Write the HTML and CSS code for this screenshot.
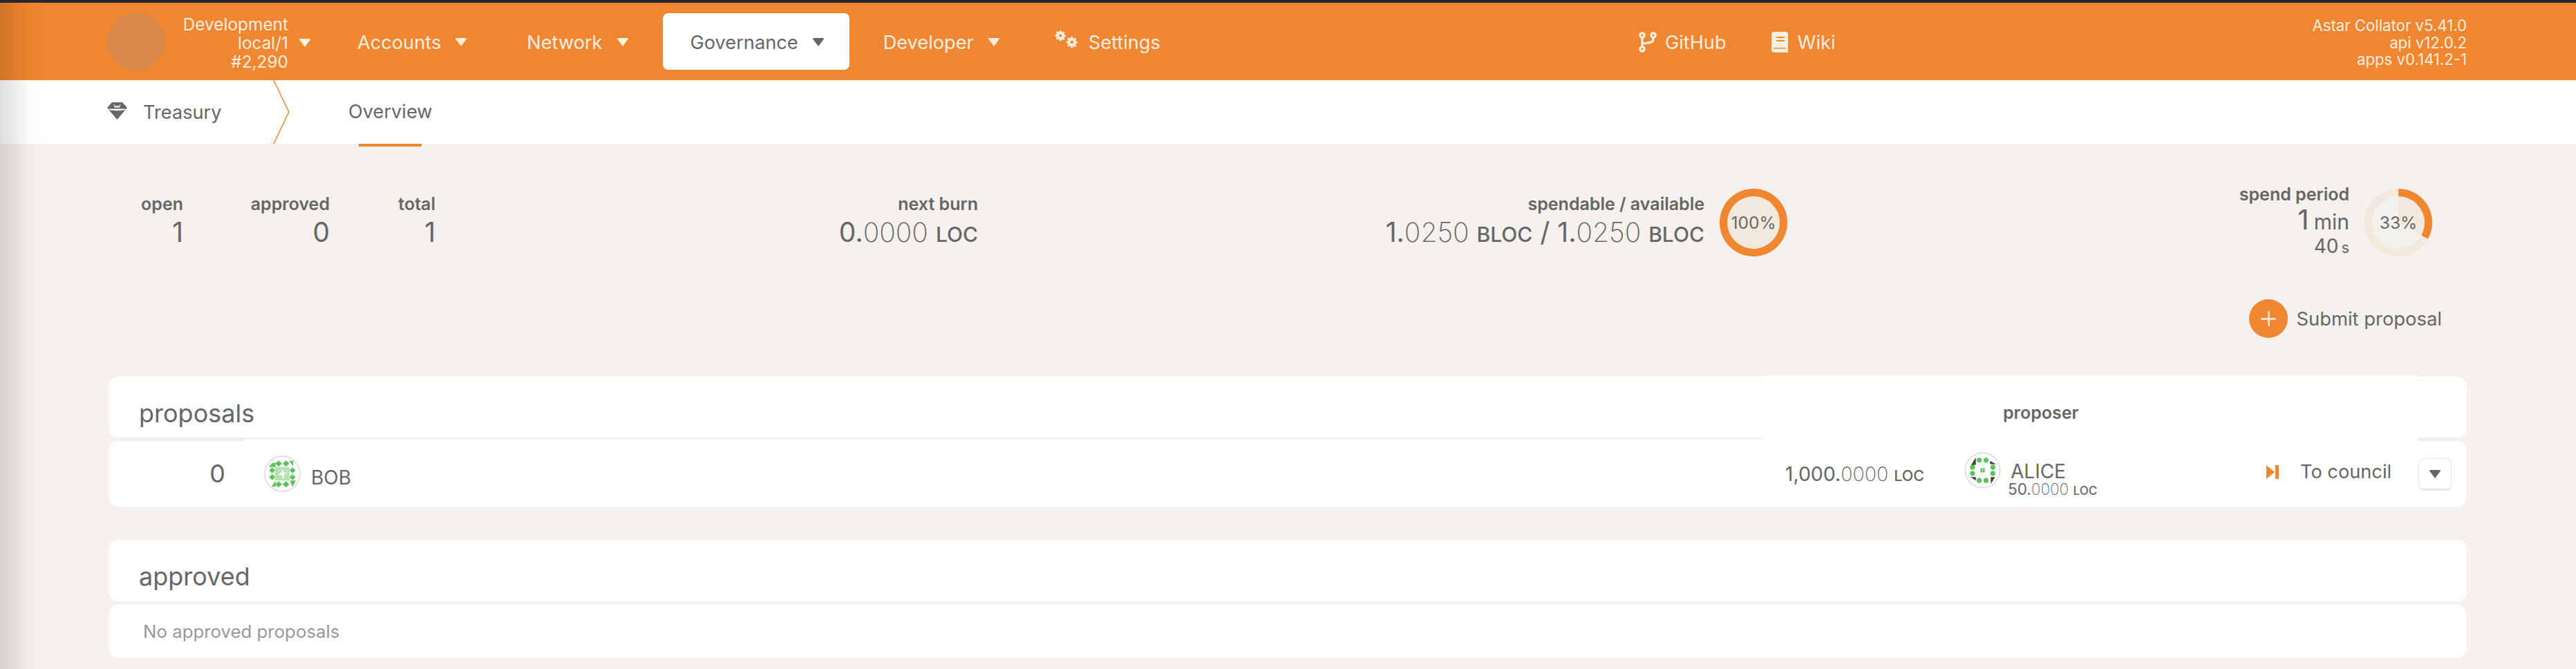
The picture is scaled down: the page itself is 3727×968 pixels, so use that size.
FILE: index.html
```html
<!DOCTYPE html>
<html lang="en">
<head>
<meta charset="utf-8">
<title>Treasury</title>
<link rel="stylesheet" href="styles.css">
</head>
<body>
<div class="edge-shade"></div>
<header class="topbar">
  <div class="chain">
    <div class="chain-logo"></div>
    <div class="chain-info">
      <div>Development</div>
      <div>local/1</div>
      <div>#2,290</div>
    </div>
    <span class="caret chain-caret"></span>
  </div>
  <nav class="menu">
    <a class="menu-item m-accounts">Accounts<span class="caret"></span></a>
    <a class="menu-item m-network">Network<span class="caret"></span></a>
    <a class="menu-item m-gov active">Governance<span class="caret"></span></a>
    <a class="menu-item m-dev">Developer<span class="caret"></span></a>
    <a class="menu-item m-settings">
      <svg class="ic-cogs" viewBox="0 0 36 28"><g fill="currentColor"><path d="M10 0h3l.5 2.600 1.600.7 2.200-1.500 2.100 2.100-1.500 2.200.7 1.600 2.600.5v3l-2.600.5-.7 1.600 1.500 2.200-2.100 2.100-2.200-1.500-1.600.7L13 19h-3l-.5-2.600-1.600-.7-2.200 1.500-2.100-2.100 1.500-2.200-.7-1.600L2 10.800v-3l2.400-.5.7-1.600-1.500-2.200 2.100-2.100 2.200 1.500 1.600-.7z" transform="scale(.8)"/><path d="M10 0h3l.5 2.600 1.600.7 2.200-1.500 2.100 2.100-1.500 2.200.7 1.600 2.600.5v3l-2.600.5-.7 1.600 1.500 2.200-2.100 2.100-2.200-1.500-1.600.7L13 19h-3l-.5-2.600-1.600-.7-2.200 1.500-2.100-2.100 1.500-2.200-.7-1.600L2 10.800v-3l2.400-.5.7-1.600-1.500-2.200 2.100-2.100 2.200 1.500 1.600-.7z" transform="translate(16 9) scale(.85)"/></g><circle cx="9.200" cy="7.400" r="2" fill="#f0862f"/><circle cx="25.800" cy="17" r="2.300" fill="#f0862f"/></svg>
      Settings
    </a>
  </nav>
  <div class="links">
    <a class="link link-gh">
      <svg class="ic-gh" viewBox="0 0 26 30"><g fill="none" stroke="currentColor" stroke-width="3.200"><circle cx="5" cy="5" r="3.200"/><circle cx="21" cy="5" r="3.200"/><circle cx="5" cy="25" r="3.200"/><path d="M5 8v14M21 8v3c0 4-4 5-16 6"/></g></svg>
      GitHub
    </a>
    <a class="link link-wiki">
      <svg class="ic-book" viewBox="0 0 24 30"><path fill="currentColor" d="M4 0h17a3 3 0 0 1 3 3v27H4a4 4 0 0 1-4-4V4a4 4 0 0 1 4-4z"/><path fill="#f0862f" d="M7 7h12v2H7zM7 12h12v2H7zM3 23h18v1.500H3z"/></svg>
      Wiki
    </a>
  </div>
  <div class="versions">
    <div>Astar Collator v5.41.0</div>
    <div>api v12.0.2</div>
    <div>apps v0.141.2-1</div>
  </div>
</header>

<div class="subbar">
  <div class="crumb">
    <svg class="ic-gem" viewBox="0 0 29 25"><path fill="#666" d="M7 0h15l7 8-14.500 17L0 8z"/><path fill="#fff" d="M2 9.500h25l-1 1.500c-6 1.500-17 1.500-23 0zM9 2l3.500 4 2-1.500 2 1.500L20 2l-2 5.500h-7z"/></svg>
    <span>Treasury</span>
  </div>
  <svg class="chevron" viewBox="0 0 24 92" preserveAspectRatio="none"><path d="M1 0l22 46L1 92" fill="none" stroke="#f0862f" stroke-width="1.500"/></svg>
  <div class="tab">Overview</div>
</div>

<main class="content">
  <section class="summary">
    <div class="stat s-open"><label>open</label><div class="val">1</div></div>
    <div class="stat s-approved"><label>approved</label><div class="val">0</div></div>
    <div class="stat s-total"><label>total</label><div class="val">1</div></div>
    <div class="stat s-burn"><label>next burn</label><div class="val">0.<i>0000</i> <small>LOC</small></div></div>
    <div class="stat s-spend"><label>spendable / available</label><div class="val">1.<i>0250</i> <small>BLOC</small> / 1.<i>0250</i> <small>BLOC</small></div></div>
    <div class="ring ring-full"><span>100%</span></div>
    <div class="stat s-period"><label>spend period</label><div class="val">1 <small class="unit">min</small></div><div class="val2">40 <small>s</small></div></div>
    <div class="ring ring-third"><span>33%</span></div>
  </section>

  <div class="actions">
    <button class="submit"><span class="plus"></span>Submit proposal</button>
  </div>

  <section class="table t-proposals">
    <div class="head">
      <h2>proposals</h2>
      <div class="head-patch"><span>proposer</span></div>
    </div>
    <div class="row">
      <div class="row-patch"></div>
      <div class="idx">0</div>
      <div class="who">
        <svg class="identicon" viewBox="0 0 54 54"><circle cx="27" cy="27" r="26" fill="#fff" stroke="#d8d8d8" stroke-width="1.500"/><path fill="#5cc25c" d="M21.600 7.500l5 4.500-5 4.500-5-4.500zM32.400 7.500l5 4.500-5 4.500-5-4.500zM12 17.500l4.500 4.500-4.500 4.500-4.500-4.500zM12 27.500l4.500 4.500-4.500 4.500-4.500-4.500zM42 17.500l4.500 4.500-4.500 4.500-4.500-4.500zM42 27.500l4.500 4.500-4.500 4.500-4.500-4.500zM21.600 38l5 4.500-5 4.500-5-4.500zM32.400 38l5 4.500-5 4.500-5-4.500zM12 11l5 0v6h-10zM37 8l6 0 0 8zM17 37v9h-6zM38 37h9l-5 9z"/><path fill="#b6e2b0" d="M16 17h21.500v20H16z"/><path fill="#fff" d="M28 20l1 5.500 5.500 .5-4.500 2.500-2 6.500-2-5.500-5.500-1.500 5-2.500z"/></svg>
        <span class="name">BOB</span>
      </div>
      <div class="amount">1,000.<i>0000</i> <small>LOC</small></div>
      <div class="proposer">
        <svg class="identicon alice" viewBox="0 0 54 54"><circle cx="27" cy="27" r="25.500" fill="#fff" stroke="#d8d8d8" stroke-width="1.500"/><g fill="#5cc25c"><circle cx="22" cy="12" r="3.700"/><circle cx="32" cy="12" r="3.700"/><circle cx="22" cy="42" r="3.700"/><circle cx="32" cy="42" r="3.700"/><circle cx="12" cy="22.500" r="3.700"/><circle cx="12" cy="31.500" r="3.700"/><circle cx="42" cy="22.500" r="3.700"/><circle cx="42" cy="31.500" r="3.700"/><path d="M24.500 23.500h1.500v7h-1.500zM28 23.500h1.500v7H28zM23.500 25h7v1.500h-7zM23.500 27.500h7V29h-7z"/></g><path fill="#444" d="M17 8l-7 11h7zM38 13l9 5h-9zM9 37h8v5zM39 37h6.500L39 47z"/></svg>
        <div class="p-text">
          <div class="name">ALICE</div>
          <div class="bond">50.<i>0000</i> <small>LOC</small></div>
        </div>
      </div>
      <a class="council">
        <svg class="ic-step" viewBox="0 0 18 20"><path fill="#f0862f" d="M0 0l12 10L0 20zM13 0h5v20h-5z"/></svg>
        To council
      </a>
      <button class="more"><span class="caret dark"></span></button>
    </div>
  </section>

  <section class="table t-approved">
    <div class="head"><h2>approved</h2></div>
    <div class="row empty">No approved proposals</div>
  </section>
</main>
</body>
</html>
```
FILE: styles.css
```css
* { box-sizing: border-box; }
html, body { margin: 0; padding: 0; height: 968px; overflow: hidden; }
body {
  background: #f4f1ee;
  color: #666;
  font-family: Inter, "Noto Sans", sans-serif;
  font-size: 28px;
  position: relative;
}
i { font-style: normal; font-weight: 200; }
.edge-shade {
  position: absolute; left: 0; top: 4px; bottom: 0; width: 70px;
  background: linear-gradient(90deg, rgba(0,0,0,.13), rgba(0,0,0,.02) 60%, transparent);
  pointer-events: none; z-index: 5;
}
.caret {
  display: inline-block; width: 0; height: 0;
  border-left: 9px solid transparent; border-right: 9px solid transparent;
  border-top: 12px solid currentColor;
  border-radius: 3px;
}

/* top bar */
.topbar {
  height: 116px; border-top: 4px solid #28272b;
  background: #f0862f; color: #fdeee0;
  display: flex; align-items: center; padding-left: 155px;
}
.chain { display: flex; align-items: center; width: 322px; flex: none; }
.chain-logo { width: 84px; height: 84px; border-radius: 50%; background: #d98a48; flex: none; }
.chain-info { width: 178px; margin-top: 4px; text-align: right; font-size: 24.400px; line-height: 27px; white-space: nowrap; }
.chain-caret { margin-left: 15px; margin-top: 4px; }
.menu { display: flex; align-items: center; flex: none; }
.menu-item {
  height: 82px; display: flex; align-items: center;
  padding: 2px 40px 0; border-radius: 8px; white-space: nowrap; font-size: 27.200px;
}
.menu-item .caret { margin-left: 20px; }
.m-network { margin-left: 6px; }
.m-gov { margin-left: 9px; padding-right: 36px; }
.m-dev { margin-left: 9px; }
.m-settings { padding: 2px 0 0; margin-left: 38px; }
.menu-item.active { background: #fff; color: #666; }
.ic-cogs { width: 36px; height: 28px; margin-right: 14px; margin-top: -6px; }
.links { display: flex; align-items: center; margin-left: 692px; margin-top: 2px; flex: none; font-size: 27.200px; }
.link { display: flex; align-items: center; }
.link-wiki { margin-left: 65px; }
.ic-gh { width: 26px; height: 30px; margin-right: 12px; }
.ic-book { width: 24px; height: 30px; margin-right: 14px; }
.versions { margin-left: auto; margin-right: 158px; margin-top: 4px; text-align: right; font-size: 22.200px; line-height: 24.500px; }

/* sub bar */
.subbar {
  height: 92px; background: #fff; display: flex; align-items: center;
  padding-left: 155px; position: relative;
}
.crumb { display: flex; align-items: center; width: 240px; flex: none; font-size: 27.200px; }
.ic-gem { width: 29px; height: 25px; margin-right: 23px; margin-top: -3px; }
.chevron { width: 24px; height: 92px; flex: none; }
.tab {
  margin-left: 85px; font-size: 27.200px; height: 92px; line-height: 92px; position: relative;
}
.tab::after {
  content: ""; position: absolute; left: 15px; right: 16px; bottom: -4px; height: 4px; background: #f0862f;
}

/* summary */
.summary { position: relative; height: 225px; }
.stat { position: absolute; top: 70px; text-align: right; white-space: nowrap; }
.stat label { display: block; font-size: 25px; font-weight: 600; line-height: 34px; }
.val { font-size: 39px; line-height: 48px; }
.val small { font-size: 30px; font-weight: 500; }
.s-open { right: calc(3727px - 265px); }
.s-approved { right: calc(3727px - 477px); }
.s-total { right: calc(3727px - 630px); }
.s-burn { right: calc(3727px - 1415px); }
.s-spend { right: calc(3727px - 2466px); }
.s-period { right: calc(3727px - 3399px); top: 56px; }
.s-period .val { line-height: 44px; font-size: 40px; margin-top: -2px; word-spacing: -4px; }
.val .unit { font-size: 30px; font-weight: 400; }
.val2 { font-size: 28px; line-height: 26px; font-weight: 400; word-spacing: -4px; }
.val2 small { font-size: 22px; font-weight: 400; }
.ring {
  position: absolute; top: 65px; width: 98px; height: 98px; border-radius: 50%;
  display: flex; align-items: center; justify-content: center; font-size: 24.500px;
}
.ring span { position: relative; }
.ring::before {
  content: ""; position: absolute; inset: 11px; border-radius: 50%; background: #f3e8dc;
}
.ring-full { left: 2488px; background: #f0862f; }
.ring-third { left: 3421px; background: conic-gradient(#f0862f 0 33%, #f3e8dc 33% 100%); }
.ring-third::before { background: conic-gradient(#f3e8dc 0 33%, #f3f1ec 33% 100%); }

.actions { height: 112px; display: flex; justify-content: flex-end; padding-right: 194px; }
.submit {
  border: 0; background: none; padding: 0; color: #666; font: inherit; font-size: 27.400px;
  display: flex; align-items: center; height: 56px;
}
.plus {
  width: 56px; height: 56px; border-radius: 50%; background: #f0862f; margin-right: 12px;
  position: relative; flex: none;
}
.plus::before, .plus::after { content: ""; position: absolute; background: #fde3cf; border-radius: 2px; }
.plus::before { left: 17px; right: 17px; top: 26.500px; height: 3px; }
.plus::after { top: 17px; bottom: 17px; left: 26.500px; width: 3px; }

/* tables */
.table { margin: 0 158px 0 157px; }
.head {
  height: 88px; background: #fff; border-radius: 14px; position: relative;
  display: flex; align-items: center; padding: 17px 0 0 44px;
}
.head h2 { margin: 0; font-size: 36px; font-weight: 400; }
.head-patch {
  position: absolute; left: 2395px; width: 947px; top: -2px; bottom: -5px;
  background: #fff; z-index: 1; font-size: 25px; font-weight: 600;
}
.head-patch span { position: absolute; left: 346px; top: 40px; line-height: 28px; }
.row {
  margin-top: 5px; background: #fff; border-radius: 14px; position: relative;
  height: 95px; display: flex; align-items: center;
}
.row-patch { position: absolute; left: 197px; width: 2198px; top: -2px; height: 4px; background: #fff; }
.idx { width: 169px; text-align: right; font-size: 36px; flex: none; margin-top: -2px; }
.who { display: flex; align-items: center; margin-left: 56px; width: 2201px; flex: none; }
.identicon { width: 53px; height: 53px; flex: none; }
.who .name { margin-left: 15px; margin-top: 10px; }
.amount { position: absolute; right: 785px; top: 31px; line-height: 34px; font-size: 28.500px; white-space: nowrap; }
.amount small { font-size: 21.500px; font-weight: 500; }
.proposer { position: absolute; left: 2685px; top: 16px; display: flex; }
.p-text { margin-left: 14px; margin-top: 13px; }
.p-text .name { line-height: 30px; }
.bond { font-size: 22.500px; line-height: 22px; margin-left: -4px; white-space: nowrap; }
.bond small { font-size: 17px; font-weight: 500; }
.council { position: absolute; left: 3122px; top: 30px; display: flex; align-items: center; font-size: 27.200px; line-height: 30px; white-space: nowrap; }
.ic-step { width: 18px; height: 20px; margin-right: 31px; }
.more {
  position: absolute; left: 3342px; top: 25px; width: 48px; height: 47px;
  background: #fff; border: 1.500px solid #e8e8e8; border-bottom-width: 3px; border-radius: 8px;
  display: flex; align-items: center; justify-content: center; padding: 0; color: #666;
}
.t-approved { margin-top: 48px; }
.t-approved .head { height: 89px; }
.empty { height: 77px; color: #999; padding-left: 50px; font-size: 25.800px; }
```
